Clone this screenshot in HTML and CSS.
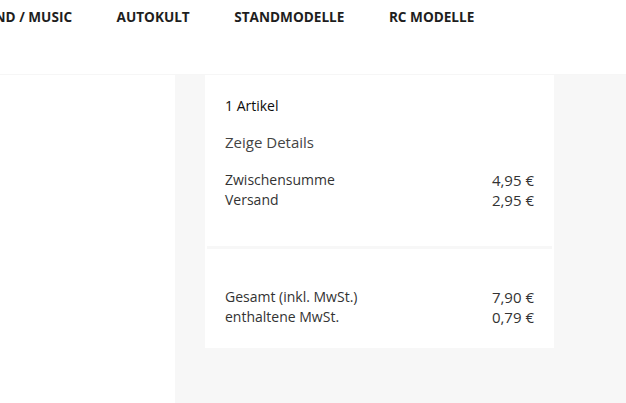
FILE: index.html
```html
<!DOCTYPE html>
<html lang="de">
<head>
<meta charset="UTF-8">
<meta name="viewport" content="width=device-width, initial-scale=1.0">
<title>Warenkorb</title>
<link rel="stylesheet" href="styles.css">
</head>
<body>
    <div class="header">
        <ul class="nav">
            <li>BAND / MUSIC</li>
            <li>AUTOKULT</li>
            <li>STANDMODELLE</li>
            <li>RC MODELLE</li>
        </ul>
    </div>
    <div class="main">
        <div class="left-col"></div>
        <div class="right-col">
            <div class="summary">
                <div class="summary-section top">
                    <div class="count">1 Artikel</div>
                    <div class="details">Zeige Details</div>
                    <div class="row"><span>Zwischensumme</span><span>4,95 €</span></div>
                    <div class="row"><span>Versand</span><span>2,95 €</span></div>
                </div>
                <div class="divider"></div>
                <div class="summary-section bottom">
                    <div class="row"><span>Gesamt (inkl. MwSt.)</span><span>7,90 €</span></div>
                    <div class="row"><span>enthaltene MwSt.</span><span>0,79 €</span></div>
                </div>
            </div>
        </div>
    </div>
</body>
</html>
```
FILE: styles.css
```css
html, body {
    height: 100%;
}
body {
    margin: 0;
    font-family: "Open Sans", "Liberation Sans", sans-serif;
    color: #333;
    background-color: #fff;
    display: flex;
    flex-direction: column;
}
.header {
    height: 75px;
    flex-shrink: 0;
    overflow: hidden;
    border-bottom: 1px solid #f6f6f6;
    box-sizing: border-box;
}
.nav {
    list-style: none;
    margin: 0 0 0 -24px;
    padding: 7px 0 0;
    display: flex;
    gap: 44.5px;
    white-space: nowrap;
}
.nav li {
    font-size: 13.6px;
    font-weight: 700;
    line-height: 20px;
    color: #1e1e1e;
}
.main {
    flex: 1;
    display: flex;
}
.left-col {
    width: 175px;
    flex-shrink: 0;
}
.right-col {
    flex: 1;
    background-color: #f7f7f7;
    padding-left: 30px;
}
.summary {
    width: 349px;
    background-color: #fff;
    padding-top: 3px;
}
.summary-section {
    padding: 0 20px;
    font-size: 14px;
    line-height: 20px;
}
.summary-section.top {
    padding-top: 18px;
    padding-bottom: 36px;
}
.summary-section.bottom {
    padding-top: 38px;
    padding-bottom: 21px;
}
.count {
    color: #0c0c0c;
}
.details {
    margin-top: 16px;
    margin-bottom: 18px;
    font-size: 15px;
    color: #444;
}
.row {
    display: flex;
    justify-content: space-between;
    color: #333;
}
.row span:last-child {
    font-size: 15px;
}
.divider {
    height: 3px;
    margin: 0 2px;
    background-color: #f7f7f7;
}
```
